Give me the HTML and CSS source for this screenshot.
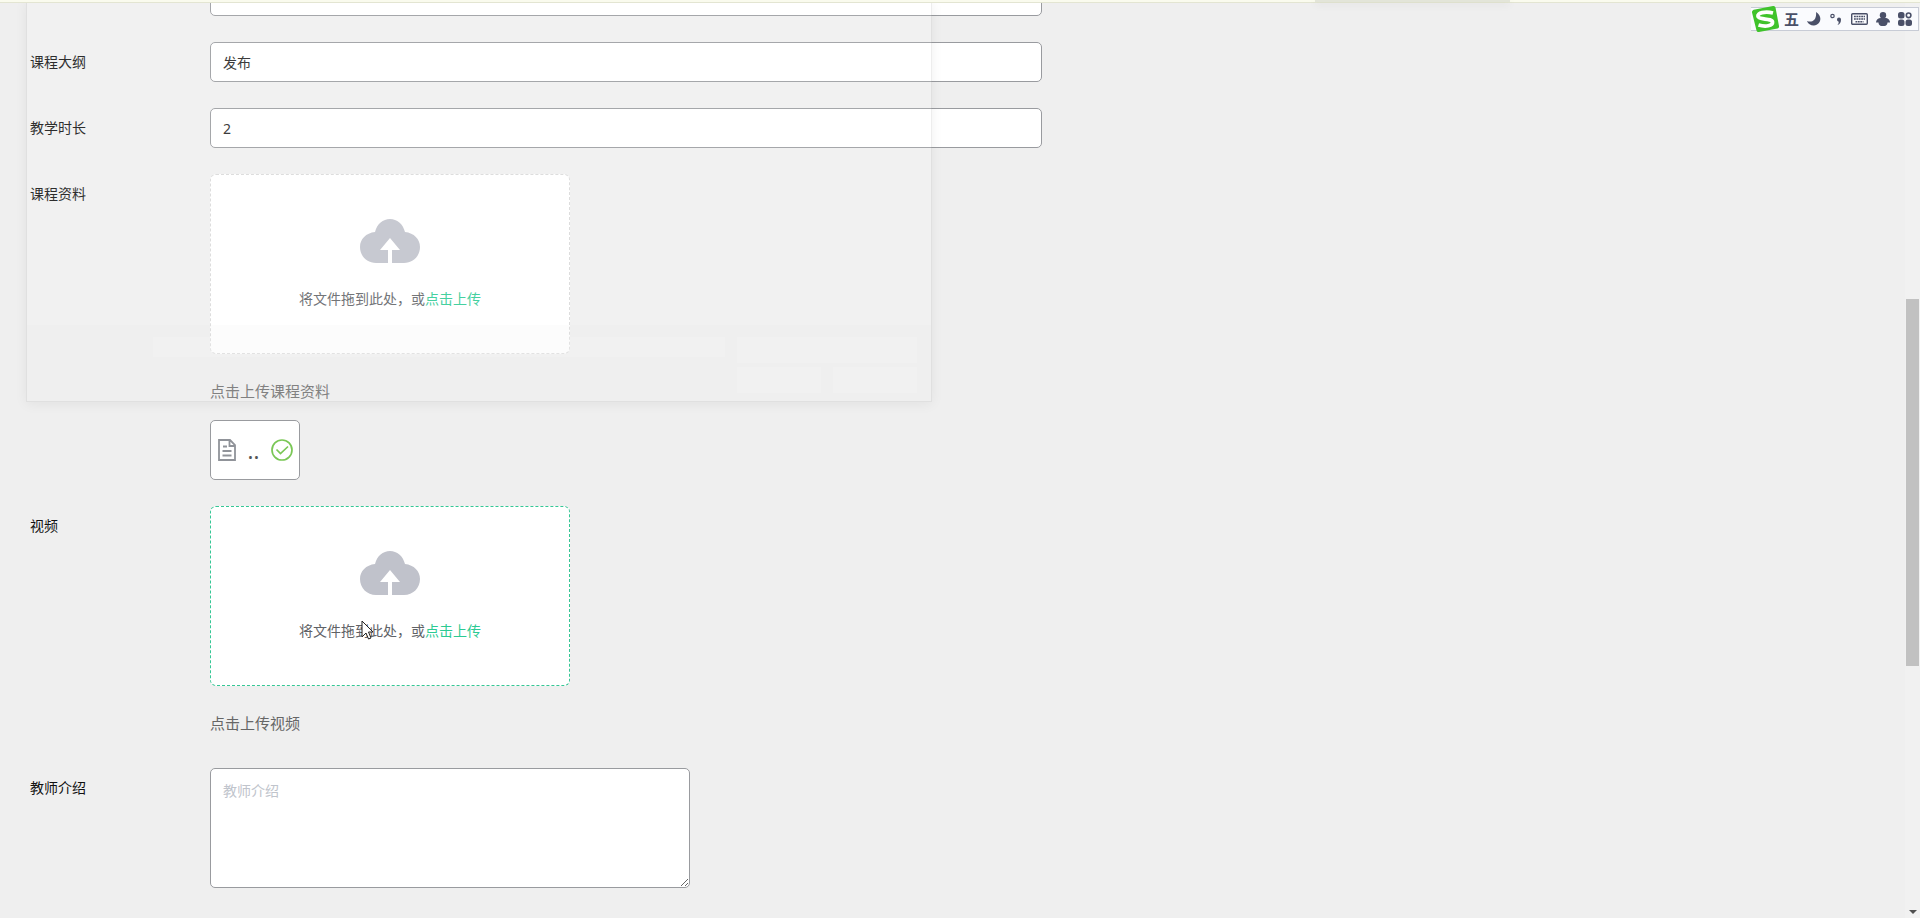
FILE: index.html
```html
<!DOCTYPE html>
<html lang="zh-CN">
<head>
<meta charset="utf-8">
<title>课程</title>
<link rel="stylesheet" href="styles.css">
</head>
<body>
<svg class="defs" aria-hidden="true">
  <symbol id="cloud" viewBox="0 0 60 44">
    <path fill="currentColor" d="M15 13C17 5 23 0 30 0s13 5 15 13c9 1 15 7 15 15 0 9-7 16-16 16H32V31h8L30 19 20 31h8v13H16C7 44 0 37 0 28c0-8 6-14 15-15z"/>
  </symbol>
</svg>
<div class="shell">
  <main class="page">
    <form class="form">
      <div class="row">
        <span class="label"></span>
        <div class="field"><input class="input" type="text" aria-label="课程"></div>
      </div>
      <div class="row">
        <label class="label" for="outline">课程大纲</label>
        <div class="field"><input class="input" id="outline" type="text" value="发布"></div>
      </div>
      <div class="row">
        <label class="label" for="hours">教学时长</label>
        <div class="field"><input class="input" id="hours" type="text" value="2"></div>
      </div>
      <div class="row">
        <span class="label">课程资料</span>
        <div class="field">
          <button class="upload" type="button">
            <svg class="cloud"><use href="#cloud"/></svg>
            <span class="hint">将文件拖到此处，或<em class="link">点击上传</em></span>
          </button>
          <p class="tip">点击上传课程资料</p>
          <div class="file">
            <svg class="doc" viewBox="0 0 18 22" fill="none" stroke="#909399" stroke-width="1.8"><path d="M1 1h11l5 5v15H1zM11.500 1v6H17M5 7.500h4M4.500 12h9M4.500 16.500h9"/></svg>
            <span class="name">..</span>
            <svg class="ok" viewBox="0 0 22 22" fill="none" stroke="#7ac756" stroke-width="1.700"><circle cx="11" cy="11" r="10"/><path d="M5.500 10.500l4 4L17 7.500"/></svg>
          </div>
        </div>
      </div>
      <div class="row">
        <span class="label">视频</span>
        <div class="field">
          <button class="upload active" type="button">
            <svg class="cloud"><use href="#cloud"/></svg>
            <span class="hint">将文件拖到此处，或<em class="link">点击上传</em></span>
            <svg class="cursor" viewBox="0 0 12 20"><path d="M1 1v16l4-4 2.500 6 2.500-1-2.500-6H12z" fill="#fff" stroke="#222"/></svg>
          </button>
          <p class="tip">点击上传视频</p>
        </div>
      </div>
      <div class="row">
        <label class="label" for="intro">教师介绍</label>
        <div class="field"><textarea class="area" id="intro" placeholder="教师介绍"></textarea></div>
      </div>
    </form>
  </main>
  <div class="scroll">
    <div class="thumb"></div>
    <svg class="down" viewBox="0 0 8 4"><path d="M0 0h8L4 4z" fill="#505050"/></svg>
  </div>
</div>
<div class="ghost">
  <div class="ghost-foot">
    <div class="ghost-line"></div>
    <div class="ghost-side"><i class="wide"></i><i></i><i></i></div>
  </div>
</div>
<div class="strip"><div class="strip-shade"></div></div>
<div class="ime">
  <svg class="ime-logo" viewBox="0 0 28 28"><path d="M4 4.500L22 1q2-.4 2.500 1.500L28 21q.3 2-1.500 2.500L8 27q-2 .4-2.500-1.500L1 7.500Q.7 5 4 4.500z" fill="#3fc32b"/><path d="M22 8C14 6 6 8 7 11.500c1 3.500 14 1.500 14.500 5.500.4 4-7 5-14 3" fill="none" stroke="#fff" stroke-width="3.800"/></svg>
  <span class="ime-mode">五</span>
  <svg class="ime-icon" viewBox="0 0 14 14"><path d="M9 0c7 4 5 13-2 13.500C4 13.700 1 12 0 9c5 2 10-1 9-9z"/></svg>
  <svg class="ime-icon" viewBox="0 0 14 14"><circle cx="3.500" cy="4" r="1.700" fill="none" stroke="#4a5068" stroke-width="1.200"/><path d="M8 7.500a2 2 0 1 1 4 0c0 3-1 4.500-3.500 5.500 1-1.500 1.500-2 1-3.500C8.500 9.300 8 8.500 8 7.500z"/></svg>
  <svg class="ime-keys" viewBox="0 0 17 12"><rect x=".7" y=".7" width="15.600" height="10.600" rx="1" fill="none" stroke="#4a5068" stroke-width="1.400"/><path d="M3 3.500h11M3 6h11M4.500 8.700h8" stroke="#4a5068" stroke-width="1.600" stroke-dasharray="1.800 .6"/></svg>
  <svg class="ime-icon" viewBox="0 0 14 14"><circle cx="7" cy="3.200" r="3.200"/><path d="M5 6h4c3 0 5 2 5 4.500h-2.500c0 2-1.500 3.500-3 3.500h-3c-1.500 0-3-1.500-3-3.500H0C0 8 2 6 5 6z"/></svg>
  <svg class="ime-icon" viewBox="0 0 14 14"><rect width="6.500" height="6.500" rx="2.500"/><circle cx="10.600" cy="3.300" r="2.300" fill="none" stroke="#4a5068" stroke-width="1.600"/><rect y="7.500" width="6.500" height="6.500" rx="2.500"/><rect x="7.500" y="7.500" width="6.500" height="6.500" rx="2.500"/></svg>
</div>
</body>
</html>
```
FILE: styles.css
```css
* { box-sizing: border-box; }
body {
  margin: 0;
  height: 100vh;
  overflow: hidden;
  background: #efefef;
  color: #111;
  font: 14px/20px "Noto Sans", "Noto Sans CJK SC", sans-serif;
}
.defs { position: absolute; width: 0; height: 0; }
.shell { display: flex; height: 100vh; }
.page { flex: 1; overflow: hidden; padding-left: 30px; }
/* The form is scrolled part of the way through its first row. */
.form { display: flex; flex-direction: column; gap: 26px; margin-top: -24px; }
.row { display: flex; }
.label { flex: 0 0 180px; line-height: 40px; }
.field { flex: 1; min-width: 0; display: flex; flex-direction: column; align-items: flex-start; }
.input, .area {
  width: 100%;
  border: 1px solid #999b9f;
  border-radius: 5px;
  background: #fff;
  color: #222;
  font: inherit;
}
.input { max-width: 832px; height: 40px; padding: 0 12px; }
.area { max-width: 480px; height: 120px; padding: 12px; resize: both; }
.area::placeholder { color: #c0c4cc; }
.upload {
  position: relative;
  display: flex;
  flex-direction: column;
  align-items: center;
  gap: 26px;
  width: 100%;
  max-width: 360px;
  height: 180px;
  padding: 44px 0 0;
  border: 1px dashed #d9d9d9;
  border-radius: 6px;
  background: #fff;
  color: #606266;
  font: inherit;
}
.active { border-color: #35c795; }
.cloud { width: 60px; height: 44px; color: #c0c2cb; }
.link { color: #2cca93; font-style: normal; }
.cursor { position: absolute; left: 150px; top: 113px; width: 12px; height: 20px; }
.tip { margin: 24px 0 6px; font-size: 15px; line-height: 26px; color: #666; }
.file {
  display: flex;
  align-items: center;
  justify-content: space-between;
  width: 90px;
  height: 60px;
  margin-top: 10px;
  padding: 0 6px 0 7px;
  border: 1px solid #999b9f;
  border-radius: 5px;
  background: #fff;
}
.doc { width: 18px; height: 22px; }
.ok { width: 22px; height: 22px; }
.name { font-size: 22px; color: #555; }
.scroll {
  display: flex;
  flex-direction: column;
  align-items: center;
  justify-content: space-between;
  width: 15px;
  padding: 299px 0 4px;
  background: #f1f1f1;
}
.thumb { width: 13px; height: 367px; background: #c1c1c1; }
.down { width: 8px; height: 4px; }
.ghost {
  position: absolute;
  left: 26px;
  top: 0;
  width: 906px;
  height: 402px;
  display: flex;
  flex-direction: column;
  justify-content: flex-end;
  border: 1px solid rgba(0, 0, 0, .07);
  border-top: 0;
  box-shadow: 0 2px 12px rgba(0, 0, 0, .06);
  background: rgba(255, 255, 255, .12);
  pointer-events: none;
}
.ghost-foot { display: flex; gap: 12px; height: 76px; padding: 12px 14px 8px 126px; background: rgba(225, 225, 225, .09); }
.ghost-line { flex: 1; height: 20px; background: rgba(255, 255, 255, .15); }
.ghost-side { display: grid; grid-template-columns: 1fr 1fr; gap: 4px 12px; width: 180px; }
.ghost-side i { background: rgba(255, 255, 255, .15); }
.ghost-side .wide { grid-column: span 2; }
.strip {
  position: absolute;
  inset: 0 0 auto;
  display: flex;
  justify-content: flex-end;
  height: 3px;
  padding-right: 410px;
  border-bottom: 1px solid #e3e5d2;
  background: #fafbee;
}
.strip-shade { width: 195px; height: 2px; background: #e3e5d9; box-shadow: 0 2px 8px rgba(0, 0, 0, .12); }
.ime {
  position: absolute;
  top: 7px;
  right: 1px;
  display: flex;
  align-items: center;
  gap: 8px;
  height: 24px;
  padding-right: 6px;
  border: 1px solid #c8ccd6;
  border-left: 0;
  background: #fafbfe;
}
.ime-logo { width: 28px; height: 28px; margin-right: -3px; }
.ime-mode { color: #4a5068; font-size: 15px; font-weight: 700; }
.ime-icon { width: 14px; height: 14px; fill: #4a5068; }
.ime-keys { width: 17px; height: 12px; }
```
